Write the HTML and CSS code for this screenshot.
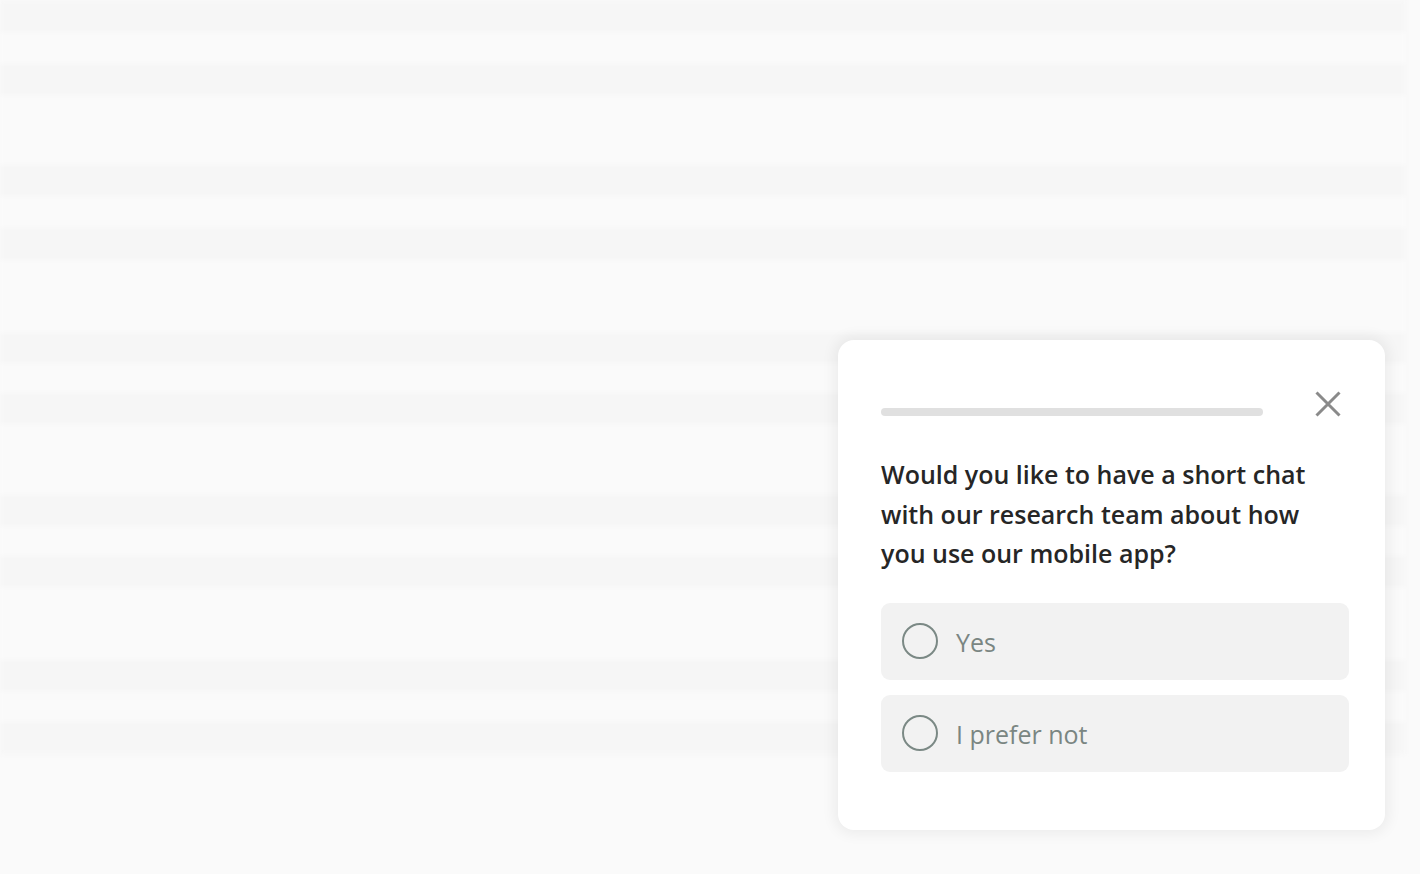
FILE: index.html
```html
<!DOCTYPE html>
<html lang="en">
<head>
<meta charset="utf-8">
<title>Survey</title>
<link rel="stylesheet" href="styles.css">
</head>
<body>
<div class="page">
  <div class="stripes">
    <div class="band dark h32"></div>
    <div class="band h32"></div>
    <div class="band dark h31"></div>
    <div class="band h70"></div>
    <div class="band dark h31"></div>
    <div class="band h32"></div>
    <div class="band dark h32"></div>
    <div class="band h73"></div>
    <div class="band dark h30"></div>
    <div class="band h30"></div>
    <div class="band dark h31"></div>
    <div class="band h71"></div>
    <div class="band dark h31"></div>
    <div class="band h30"></div>
    <div class="band dark h31"></div>
    <div class="band h73"></div>
    <div class="band dark h31"></div>
    <div class="band h31"></div>
    <div class="band dark h32"></div>
  </div>

  <div class="card" role="dialog">
    <div class="card-head">
      <div class="progress"></div>
      <button class="close" aria-label="Close">
        <svg width="26" height="26" viewBox="0 0 26 26"><path d="M1.5 1.5 L24.5 24.5 M24.5 1.5 L1.5 24.5" stroke="#8a8a8a" stroke-width="3" fill="none"/></svg>
      </button>
    </div>
    <p class="question">Would you like to have a short chat with our research team about how you use our mobile app?</p>
    <div class="options">
      <label class="option"><span class="radio"></span><span class="opt-text">Yes</span></label>
      <label class="option"><span class="radio"></span><span class="opt-text">I prefer not</span></label>
    </div>
  </div>
</div>
</body>
</html>
```

FILE: styles.css
```css
* { box-sizing: border-box; }
html, body { margin: 0; padding: 0; }
body {
  background: #fafafa;
  font-family: "Open Sans", "Noto Sans", sans-serif;
  width: 1420px;
  height: 874px;
  overflow: hidden;
}
.page {
  position: relative;
  width: 1420px;
  height: 874px;
}
.stripes {
  width: 1405px;
  display: flex;
  flex-direction: column;
  filter: blur(2px);
}
.band { background: #fafafa; }
.band.dark { background: #f6f6f6; }
.h30 { height: 30px; }
.h31 { height: 31px; }
.h32 { height: 32px; }
.h70 { height: 70px; }
.h71 { height: 71px; }
.h73 { height: 73px; }

.card {
  position: absolute;
  left: 838px;
  top: 340px;
  width: 547px;
  height: 490px;
  background: #ffffff;
  border-radius: 16px;
  box-shadow: 0 0 14px 4px rgba(0, 0, 0, 0.06);
  padding: 51px 36px 0 43px;
}
.card-head {
  display: flex;
  align-items: flex-end;
  justify-content: space-between;
  height: 26px;
}
.progress {
  width: 382px;
  height: 8px;
  margin-bottom: 1px;
  background: #e0e0e0;
  border-radius: 4px;
}
.close {
  border: 0;
  background: none;
  padding: 0;
  margin: 0 8px 0 0;
  width: 26px;
  height: 26px;
  display: block;
  cursor: pointer;
}
.close svg { display: block; }
.question {
  margin: 38px 0 0 0;
  font-size: 25px;
  font-weight: 600;
  line-height: 39.6px;
  color: #262626;
  width: 450px;
}
.options {
  margin-top: 29px;
  display: flex;
  flex-direction: column;
  gap: 15px;
}
.option {
  display: flex;
  align-items: center;
  height: 77px;
  background: #f2f2f2;
  border-radius: 9px;
  padding-left: 21px;
  gap: 18px;
}
.radio {
  width: 36px;
  height: 36px;
  border-radius: 50%;
  border: 2.8px solid #7b8985;
  flex: none;
}
.opt-text {
  font-size: 25px;
  font-weight: 400;
  color: #7a8682;
  line-height: 1;
  padding-top: 2px;
}
```
